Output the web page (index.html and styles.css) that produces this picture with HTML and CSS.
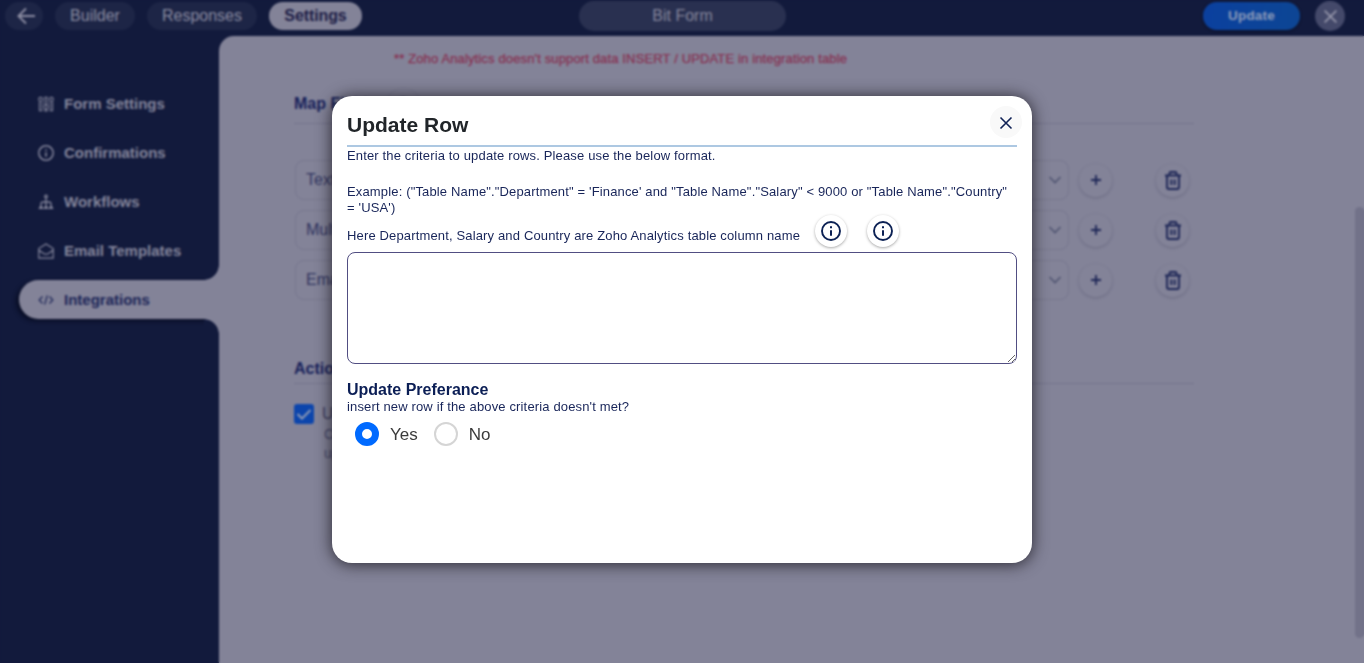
FILE: index.html
```
<!DOCTYPE html>
<html lang="en">
<head>
<meta charset="utf-8">
<title>Bit Form</title>
<link rel="stylesheet" href="styles.css">
</head>
<body>
<svg class="defs" width="0" height="0">
  <symbol id="trash" viewBox="0 0 20 22"><path d="M2 6.500h16M6.500 6V4.200Q6.500 3 7.700 3h4.600Q13.500 3 13.500 4.200V6M4 7v11Q4 20 6 20h8Q16 20 16 18V7M8.300 10.500v5.500M11.700 10.500v5.500" fill="none" stroke="currentColor" stroke-width="1.900"/></symbol>
  <symbol id="chev" viewBox="0 0 14 10"><path d="M1.500 2l5.500 5.500L12.500 2" fill="none" stroke="currentColor" stroke-width="1.700"/></symbol>
  <symbol id="plus" viewBox="0 0 10 10"><path d="M5 0v10M0 5h10" fill="none" stroke="currentColor" stroke-width="1.800"/></symbol>
  <symbol id="info" viewBox="0 0 20 20"><circle cx="10" cy="10" r="9" fill="none" stroke="currentColor" stroke-width="1.900"/><path d="M10 9.200v5.600M10 5.200v2" stroke="currentColor" stroke-width="2"/></symbol>
  <symbol id="cross" viewBox="0 0 14 14"><path d="M1.500 1.500l11 11M12.500 1.500l-11 11" stroke="currentColor" stroke-width="1.600" fill="none"/></symbol>
</svg>
<div class="app">
  <header class="top">
    <nav class="tabs">
      <span class="tab back"><svg width="20" height="18" viewBox="0 0 20 18"><path d="M19 9H3M10 1.500L2.500 9l7.500 7.500" fill="none" stroke="currentColor" stroke-width="2"/></svg></span>
      <span class="tab builder">Builder</span>
      <span class="tab responses">Responses</span>
      <span class="tab current">Settings</span>
    </nav>
    <div class="form-name">Bit Form</div>
    <div class="top-right">
      <span class="update">Update</span>
      <span class="exit"><svg width="15" height="15"><use href="#cross"/></svg></span>
    </div>
  </header>
  <div class="body">
    <aside class="side">
      <div class="item"><svg width="16" height="16" viewBox="0 0 16 16" fill="none" stroke="currentColor" stroke-width="1.100"><circle cx="2.600" cy="3.300" r="1.900"/><circle cx="8" cy="11" r="1.900"/><circle cx="13.400" cy="3.300" r="1.900"/><path d="M1.400 5.500v9.300h2.400V5.500M6.800 9V1.200h2.400V9M6.800 13v2h2.400v-2M12.200 5.500v9.300h2.400V5.500"/></svg><span>Form Settings</span></div>
      <div class="item"><svg width="16" height="16"><use href="#info"/></svg><span>Confirmations</span></div>
      <div class="item"><svg width="16" height="16" viewBox="0 0 16 16" fill="none" stroke="currentColor" stroke-width="1.300"><circle cx="8" cy="2.500" r="1.300"/><path d="M8 4V12M3 12V10q0-2 2-2h6q2 0 2 2v2M1.500 14.300l1.500-2.500 1.500 2.500zM6.500 14.300L8 11.800l1.500 2.500zM11.500 14.300l1.500-2.500 1.500 2.500z"/></svg><span>Workflows</span></div>
      <div class="item"><svg width="16" height="16" viewBox="0 0 16 16" fill="none" stroke="currentColor" stroke-width="1.200"><path d="M.8 15.200V5.500L8 .9l7.200 4.600v9.700zM1 7.300l5 3.400q2 1 4 0l5-3.400"/></svg><span>Email Templates</span></div>
      <div class="item active"><svg width="16" height="16" viewBox="0 0 16 16" fill="none" stroke="currentColor" stroke-width="1.200"><path d="M4.500 4.500L1.200 8l3.300 3.500M11.500 4.500L14.800 8l-3.300 3.500M9.300 3.500l-2.600 9"/></svg><span>Integrations</span></div>
    </aside>
    <main class="panel">
      <div class="warn">** Zoho Analytics doesn't support data INSERT / UPDATE in integration table</div>
      <div class="heading map"><b>Map Fields</b><span class="round mini"><svg width="16" height="16"><use href="#info"/></svg></span></div>
      <div class="rows">
        <div class="row"><div class="field">Text</div><div class="field end"><svg width="14" height="10"><use href="#chev"/></svg></div><span class="round"><svg width="10" height="10"><use href="#plus"/></svg></span><span class="round del"><svg width="20" height="22"><use href="#trash"/></svg></span></div>
        <div class="row"><div class="field">Multi</div><div class="field end"><svg width="14" height="10"><use href="#chev"/></svg></div><span class="round"><svg width="10" height="10"><use href="#plus"/></svg></span><span class="round del"><svg width="20" height="22"><use href="#trash"/></svg></span></div>
        <div class="row"><div class="field">Email</div><div class="field end"><svg width="14" height="10"><use href="#chev"/></svg></div><span class="round"><svg width="10" height="10"><use href="#plus"/></svg></span><span class="round del"><svg width="20" height="22"><use href="#trash"/></svg></span></div>
      </div>
      <div class="heading actions"><b>Actions</b></div>
      <div class="option">
        <span class="check"><svg width="20" height="20" viewBox="0 0 20 20"><path d="M3.500 10l4.500 4.500 8.500-8.500" fill="none" stroke="#8d99b4" stroke-width="2"/></svg></span>
        <div><div class="opt-title">Up</div><div class="opt-sub">Ch<br>up</div></div>
      </div>
    </main>
    <div class="scroll"></div>
  </div>
</div>
<div class="overlay">
  <section class="modal">
    <div class="modal-head"><h1>Update Row</h1><span class="close"><svg width="14" height="14"><use href="#cross"/></svg></span></div>
    <p class="text intro">Enter the criteria to update rows. Please use the below format.</p>
    <p class="text example">Example: ("Table Name"."Department" = 'Finance' and "Table Name"."Salary" &lt; 9000 or "Table Name"."Country" = 'USA')</p>
    <div class="note"><span class="text">Here Department, Salary and Country are Zoho Analytics table column name</span><span class="tip"><svg width="20" height="20"><use href="#info"/></svg></span><span class="tip"><svg width="20" height="20"><use href="#info"/></svg></span></div>
    <textarea class="criteria"></textarea>
    <h2>Update Preferance</h2>
    <p class="text">insert new row if the above criteria doesn't met?</p>
    <div class="radios"><span class="radio on"></span><span class="label">Yes</span><span class="radio"></span><span class="label">No</span></div>
  </section>
</div>
</body>
</html>
```
FILE: styles.css
```
* { box-sizing: border-box; }
body { margin: 0; height: 663px; overflow: hidden; font-family: "Liberation Sans", Arial, sans-serif; color: #1b2351; }
p, h1, h2 { margin: 0; }
svg { display: block; flex: none; }
.defs { position: absolute; }
.app { height: 663px; background: #121a3c; }
.top { height: 36px; display: grid; grid-template-columns: 579px 207px 1fr; align-items: start; }
.tabs { display: flex; gap: 12px; padding: 2px 0 0 5px; }
.tab { height: 28px; border-radius: 14px; background: #1d2546; color: #8b8ca2; font-size: 16px; display: flex; align-items: center; justify-content: center; }
.back { width: 38px; padding-left: 4px; }
.builder { width: 80px; }
.responses { width: 110px; }
.current { width: 93px; background: #838398; color: #1c1c45; font-weight: bold; letter-spacing: -.1px; }
.form-name { margin-top: 1px; height: 30px; border-radius: 15px; background: #293050; color: #85869c; font-size: 16px; line-height: 29px; text-align: center; }
.top-right { display: flex; justify-content: flex-end; gap: 15px; padding: 1px 19px 0 0; }
.update { width: 97px; height: 28px; margin-top: 1px; border-radius: 14px; background: linear-gradient(100deg, #0b409f, #0d4694); box-shadow: 0 1px 3px #0b1027; color: #8e9cba; font-size: 13.5px; letter-spacing: .2px; font-weight: bold; text-align: center; line-height: 28px; }
.exit { width: 30px; height: 30px; border-radius: 50%; background: #44496a; color: #9596aa; display: grid; place-items: center; }
.body { height: 627px; display: grid; grid-template-columns: 219px 1fr 9px; background: linear-gradient(90deg, #121a3c 235px, #838398 235px); }
.side { padding: 48px 0 0 19px; }
.item { height: 39px; margin-bottom: 10px; padding-left: 19px; display: flex; align-items: center; gap: 10px; color: #85869c; font-weight: bold; font-size: 15px; }
.active { position: relative; background: #838398; color: #1c2557; border-radius: 20px 0 0 20px; box-shadow: -3px 2px 4px #080d24; clip-path: inset(-15px 0 -15px -10px); }
.active::before, .active::after { content: ""; position: absolute; right: 0; width: 15px; height: 15px; }
.active::before { top: -15px; background: radial-gradient(circle at 0 0, #121a3c 14.500px, #838398 15px); }
.active::after { bottom: -15px; background: radial-gradient(circle at 0 100%, #121a3c 14.500px, #838398 15px); }
.panel { background: #838398; border-top-left-radius: 15px; padding: 0 161px 0 75px; overflow: hidden; }
.warn { padding: 14px 0 0 100px; height: 52px; color: #872f50; font-size: 13px; letter-spacing: .14px; line-height: 17px; -webkit-text-stroke: .25px #872f50; }
.heading { border-bottom: 1px solid #74748c; font-size: 16px; color: #17215a; display: flex; align-items: center; }
.map { height: 36px; padding-bottom: 3px; }
.mini { margin: 0 0 -2px 10px; }
.rows { padding: 36px 0 0 1px; display: grid; gap: 10px; }
.row { height: 40px; display: flex; align-items: center; }
.field { width: 380px; height: 40px; border: 1px solid #77778e; border-radius: 9px; padding-left: 10px; font-size: 16px; line-height: 38px; color: #30345f; }
.field.end { width: 384px; margin-left: 10px; margin-right: 10px; display: flex; align-items: center; justify-content: flex-end; padding-right: 6px; color: #515572; }
.round { width: 33px; height: 33px; flex: none; border-radius: 50%; box-shadow: 0 1px 3px #6a6a82; display: grid; place-items: center; color: #1b2455; }
.del { margin-left: 44px; }
.actions { margin-top: 54px; height: 30px; padding-top: 1px; }
.option { display: flex; gap: 8px; padding-top: 20px; }
.check { width: 20px; height: 20px; border-radius: 3px; background: #0c45ac; }
.opt-title { font-size: 16px; line-height: 19px; color: #3b3d5e; }
.opt-sub { font-size: 14px; line-height: 19px; color: #45486a; padding: 2px 0 0 2px; }
.scroll { height: 431px; margin-top: 171px; background: #727289; border-radius: 5px; }
.overlay { position: fixed; inset: 0; backdrop-filter: blur(1px); display: flex; justify-content: center; align-items: flex-start; padding-top: 96px; }
.modal { width: 700px; height: 467px; background: #fff; border-radius: 20px; box-shadow: 0 1px 15px 1px rgba(20,18,24,.75); padding: 10px 15px; }
.modal-head { height: 41px; border-bottom: 2px solid #adc8e2; display: flex; justify-content: space-between; align-items: flex-start; }
h1 { font-size: 21px; line-height: 37px; color: #212529; }
.close { width: 32px; height: 32px; margin-right: -5px; padding-top: 1px; border-radius: 50%; background: #f9f9f9; color: #102256; display: grid; place-items: center; }
.text { font-size: 13px; line-height: 16px; letter-spacing: .15px; color: #182559; }
.intro { padding-top: 1px; }
.example { margin-top: 20px; }
.note { display: flex; align-items: flex-start; height: 36px; }
.note .text { width: 468px; padding-top: 12px; white-space: nowrap; }
.tip { width: 32px; height: 32px; margin: -1px 20px 0 0; border-radius: 50%; box-shadow: 0 1px 3px #aaa; display: grid; place-items: center; color: #0c2154; }
.criteria { display: block; width: 670px; height: 112px; margin: 0; border: 1px solid #514e82; border-radius: 8px; background: #fff; resize: vertical; outline: 0; }
h2 { font-size: 16px; line-height: 18px; margin-top: 17px; color: #0b1e55; }
.radios { display: flex; align-items: center; padding: 7px 0 0 8px; }
.radio { width: 24px; height: 24px; border-radius: 50%; border: 2px solid #d5d5d5; }
.radio.on { border: 7px solid #006aff; }
.label { font-size: 17px; line-height: 20px; padding-top: 1px; color: #3b3b3b; margin: 0 16px 0 11px; }
```
